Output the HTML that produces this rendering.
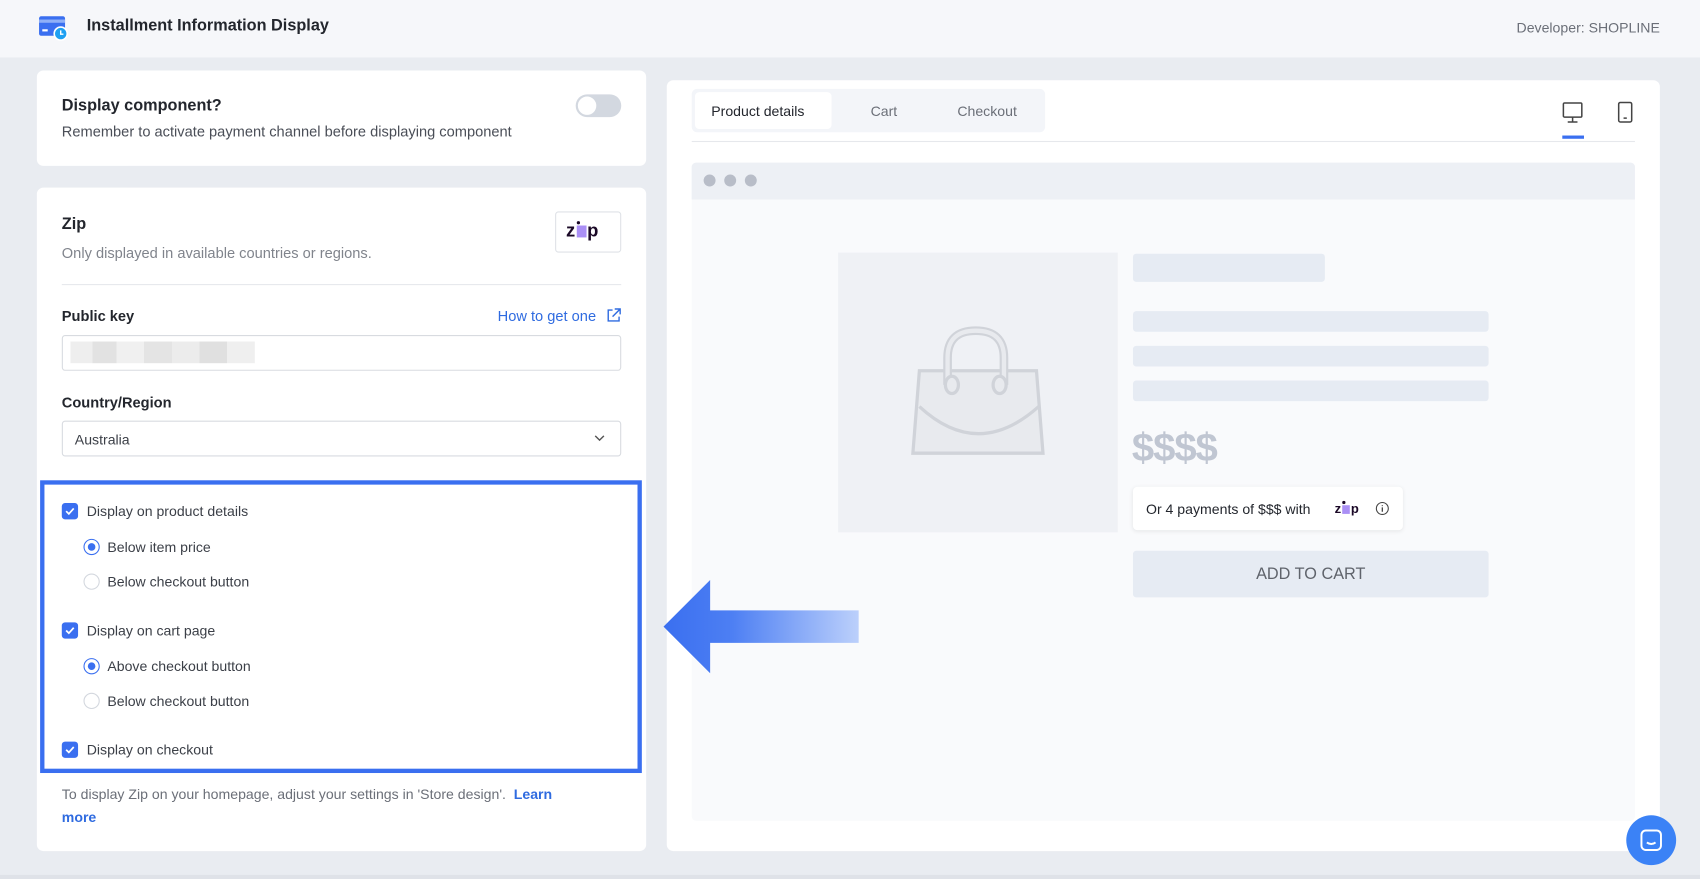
<!DOCTYPE html>
<html><head><meta charset="utf-8"><style>
*{box-sizing:border-box;margin:0;padding:0}
html,body{width:1700px;height:879px;overflow:hidden;background:#e9ecf1;font-family:"Liberation Sans",Arial,sans-serif}
#w{position:absolute;left:0;top:0;width:1568px;height:811px;transform:scale(1.08418);transform-origin:0 0;background:#e9ecf1}
.a{position:absolute}
.card{position:absolute;background:#fff;border-radius:6px}
.t{position:absolute;white-space:nowrap}
.cb{position:absolute;width:15px;height:15px;border-radius:3px;background:#3a6ff0}
.cb svg{position:absolute;left:2px;top:2px}
.rd{position:absolute;width:15px;height:15px;border-radius:50%;border:1.5px solid #3a6ff0;background:#fff}
.rd.on::after{content:"";position:absolute;left:2.5px;top:2.5px;width:7px;height:7px;border-radius:50%;background:#3a6ff0}
.rd.off{border-color:#d3d7de}
.lbl{font-size:13px;color:#3b3f47}
.bar{position:absolute;background:#e6ebf3;border-radius:3px}
.zip{position:absolute;font-weight:900;color:#1a0826;display:flex;align-items:flex-end;gap:1px}
.zip i{display:inline-block;background:#aa8ff5;position:relative}
.zip i::before{content:"";position:absolute;left:0;top:-4px;width:3px;height:3px;border-radius:50%;background:#1a0826}
</style></head><body><div id="w">
<div class="a" style="left:0;top:0;width:1568px;height:53px;background:#f6f7fa"></div>
<svg class="a" style="left:36px;top:14px" width="28" height="24" viewBox="0 0 28 24"><rect x="0" y="1" width="24" height="18" rx="2" fill="#3a6ff0"/><rect x="0" y="4" width="24" height="3" fill="#8fb0f7"/><rect x="3" y="13" width="5" height="2" fill="#fff"/><circle cx="20" cy="17" r="6" fill="#1ea0f2" stroke="#fff" stroke-width="1.5"/><path d="M20 14v3.5h2.5" stroke="#fff" stroke-width="1.3" fill="none"/></svg>
<div class="t" style="left:80px;top:15px;font-size:15px;font-weight:bold;color:#23262d">Installment Information Display</div>
<div class="t" style="right:37px;top:18px;font-size:13px;color:#6b6f78">Developer: SHOPLINE</div>

<div class="card" style="left:34px;top:65px;width:562px;height:88px"></div>
<div class="t" style="left:57px;top:89px;font-size:15px;font-weight:bold;color:#23262d">Display component?</div>
<div class="t" style="left:57px;top:114px;font-size:13.5px;color:#4a4e57">Remember to activate payment channel before displaying component</div>
<div class="a" style="left:531px;top:87px;width:42px;height:21px;border-radius:11px;background:#d3d8e0"></div>
<div class="a" style="left:533px;top:89px;width:17px;height:17px;border-radius:50%;background:#fff"></div>

<div class="card" style="left:34px;top:173px;width:562px;height:612px"></div>
<div class="t" style="left:57px;top:198px;font-size:15px;font-weight:bold;color:#23262d">Zip</div>
<div class="t" style="left:57px;top:226px;font-size:13.5px;color:#80848c">Only displayed in available countries or regions.</div>
<div class="a" style="left:512px;top:195px;width:61px;height:38px;border:1px solid #dfe2e7;border-radius:3px;background:#fff"></div>
<div class="zip" style="left:522px;top:204px;font-size:17px;line-height:17px">z<i style="width:9px;height:11px;margin-bottom:2px"></i>p</div>
<div class="a" style="left:57px;top:262px;width:516px;height:1px;background:#e6e8ec"></div>
<div class="t" style="left:57px;top:284px;font-size:13.5px;font-weight:bold;color:#23262d">Public key</div>
<div class="t" style="left:459px;top:284px;font-size:13.5px;color:#2f6be0">How to get one</div>
<svg class="a" style="left:559px;top:284px" width="14" height="14" viewBox="0 0 14 14"><path d="M6 2H2v10h10V8M8 1h5v5M13 1L6 8" stroke="#2f6be0" stroke-width="1.3" fill="none"/></svg>
<div class="a" style="left:57px;top:309px;width:516px;height:33px;border:1px solid #d8dbe0;border-radius:3px"></div>
<div class="a" style="left:65px;top:315px;width:170px;height:20px;background:linear-gradient(90deg,#eee 0 12%,#e2e2e2 12% 25%,#f0f0f0 25% 40%,#e4e4e4 40% 55%,#ececec 55% 70%,#e0e0e0 70% 85%,#efefef 85%)"></div>
<div class="t" style="left:57px;top:364px;font-size:13.5px;font-weight:bold;color:#23262d">Country/Region</div>
<div class="a" style="left:57px;top:388px;width:516px;height:33px;border:1px solid #d8dbe0;border-radius:3px"></div>
<div class="t" style="left:69px;top:398px;font-size:13px;color:#3b3f47">Australia</div>
<svg class="a" style="left:548px;top:401px" width="10" height="7" viewBox="0 0 10 7"><path d="M1 1l4 4 4-4" stroke="#555" stroke-width="1.3" fill="none"/></svg>

<div class="a" style="left:37px;top:443px;width:555px;height:270px;border:4px solid #3a6ff0"></div>
<div class="cb" style="left:57px;top:464px"><svg width="11" height="11" viewBox="0 0 11 11"><path d="M2 5.5l2.5 2.5L9 3" stroke="#fff" stroke-width="1.6" fill="none"/></svg></div>
<div class="t lbl" style="left:80px;top:464px">Display on product details</div>
<div class="rd on" style="left:77px;top:497px"></div><div class="t lbl" style="left:99px;top:497px">Below item price</div>
<div class="rd off" style="left:77px;top:529px"></div><div class="t lbl" style="left:99px;top:529px">Below checkout button</div>
<div class="cb" style="left:57px;top:574px"><svg width="11" height="11" viewBox="0 0 11 11"><path d="M2 5.5l2.5 2.5L9 3" stroke="#fff" stroke-width="1.6" fill="none"/></svg></div>
<div class="t lbl" style="left:80px;top:574px">Display on cart page</div>
<div class="rd on" style="left:77px;top:607px"></div><div class="t lbl" style="left:99px;top:607px">Above checkout button</div>
<div class="rd off" style="left:77px;top:639px"></div><div class="t lbl" style="left:99px;top:639px">Below checkout button</div>
<div class="cb" style="left:57px;top:684px"><svg width="11" height="11" viewBox="0 0 11 11"><path d="M2 5.5l2.5 2.5L9 3" stroke="#fff" stroke-width="1.6" fill="none"/></svg></div>
<div class="t lbl" style="left:80px;top:684px">Display on checkout</div>
<div class="a" style="left:57px;top:722px;font-size:13px;color:#6b6f78;line-height:21px;width:470px">To display Zip on your homepage, adjust your settings in 'Store design'. &nbsp;<b style="color:#2f6be0">Learn</b><br><b style="color:#2f6be0">more</b></div>

<div class="card" style="left:615px;top:74px;width:916px;height:711px"></div>
<div class="a" style="left:638px;top:82px;width:326px;height:40px;background:#f3f5f9;border-radius:5px"></div>
<div class="a" style="left:641px;top:85px;width:126px;height:34px;background:#fff;border-radius:4px"></div>
<div class="t" style="left:656px;top:95px;font-size:13px;color:#23262d">Product details</div>
<div class="t" style="left:803px;top:95px;font-size:13px;color:#6b6f78">Cart</div>
<div class="t" style="left:883px;top:95px;font-size:13px;color:#6b6f78">Checkout</div>
<div class="a" style="left:638px;top:130px;width:870px;height:1px;background:#e6e8ec"></div>
<svg class="a" style="left:1440px;top:93px" width="22" height="22" viewBox="0 0 22 22"><rect x="2" y="2" width="17" height="13" rx="1" stroke="#444" stroke-width="1.4" fill="none"/><path d="M10.5 15v4M6 19.5h9" stroke="#444" stroke-width="1.4"/></svg>
<div class="a" style="left:1441px;top:125px;width:20px;height:3px;background:#3a6ff0"></div>
<svg class="a" style="left:1490px;top:93px" width="18" height="22" viewBox="0 0 18 22"><rect x="3" y="1.5" width="12" height="18" rx="1.5" stroke="#444" stroke-width="1.4" fill="none"/><path d="M7.5 16h3" stroke="#444" stroke-width="1.4"/></svg>

<div class="a" style="left:638px;top:150px;width:870px;height:607px;background:#f9fafc;border-radius:4px"></div>
<div class="a" style="left:638px;top:150px;width:870px;height:34px;background:#edf0f5;border-radius:4px 4px 0 0"></div>
<div class="a" style="left:649px;top:161px;width:11px;height:11px;border-radius:50%;background:#b8bdc8"></div>
<div class="a" style="left:668px;top:161px;width:11px;height:11px;border-radius:50%;background:#b8bdc8"></div>
<div class="a" style="left:687px;top:161px;width:11px;height:11px;border-radius:50%;background:#b8bdc8"></div>
<div class="a" style="left:773px;top:233px;width:258px;height:258px;background:#eff1f5"></div>
<svg class="a" style="left:838px;top:300px" width="130" height="125" viewBox="0 0 130 125"><path d="M10 42H118L124 118H4Z" fill="#e8eaee" stroke="#d0d3d9" stroke-width="3"/><path d="M10 75Q64 125 120 75" fill="none" stroke="#d0d3d9" stroke-width="3"/><path d="M36 55V30Q36 5 62 5Q88 5 88 30V55" fill="none" stroke="#d0d3d9" stroke-width="8"/><path d="M36 55V30Q36 5 62 5Q88 5 88 30V55" fill="none" stroke="#e8eaee" stroke-width="4"/><ellipse cx="40" cy="55" rx="6" ry="8" fill="#e8eaee" stroke="#d0d3d9" stroke-width="3"/><ellipse cx="84" cy="55" rx="6" ry="8" fill="#e8eaee" stroke="#d0d3d9" stroke-width="3"/></svg>
<div class="bar" style="left:1045px;top:234px;width:177px;height:26px"></div>
<div class="bar" style="left:1045px;top:287px;width:328px;height:19px"></div>
<div class="bar" style="left:1045px;top:319px;width:328px;height:19px"></div>
<div class="bar" style="left:1045px;top:351px;width:328px;height:19px"></div>
<div class="t" style="left:1044px;top:392px;font-size:37px;font-weight:bold;color:#c0c6d2;letter-spacing:-1px">$$$$</div>
<div class="a" style="left:1045px;top:449px;width:249px;height:40px;background:#fff;border-radius:4px;box-shadow:0 1px 4px rgba(0,0,0,.08)"></div>
<div class="t" style="left:1057px;top:462px;font-size:13px;color:#23262d">Or 4 payments of $$$ with</div>
<div class="zip" style="left:1231px;top:463px;font-size:12px;line-height:12px">z<i style="width:7px;height:8px;margin-bottom:1px"></i>p</div>
<svg class="a" style="left:1268px;top:462px" width="14" height="14" viewBox="0 0 14 14"><circle cx="7" cy="7" r="5.5" stroke="#444" fill="none"/><path d="M7 6v4M7 4v.8" stroke="#444" stroke-width="1.2"/></svg>
<div class="a" style="left:1045px;top:508px;width:328px;height:43px;background:#e6ebf3;border-radius:3px"></div>
<div class="t" style="left:1045px;top:521px;width:328px;text-align:center;font-size:15px;color:#5f636b">ADD TO CART</div>

<svg class="a" style="left:610px;top:533px" width="185" height="90" viewBox="0 0 185 90"><defs><linearGradient id="g" x1="0" x2="1"><stop offset="0" stop-color="#3a6ff0"/><stop offset="0.35" stop-color="#4d7ff3"/><stop offset="1" stop-color="#bcd0fb"/></linearGradient></defs><path d="M2 45L45 2V30H182V60H45V88Z" fill="url(#g)"/></svg>

<div class="a" style="left:1500px;top:752px;width:46px;height:46px;border-radius:50%;background:#3b82f6"></div>
<svg class="a" style="left:1512px;top:764px" width="22" height="22" viewBox="0 0 22 22"><rect x="2" y="2" width="18" height="18" rx="4" stroke="#fff" stroke-width="1.8" fill="none"/><path d="M7 13q4 3 8 0" stroke="#fff" stroke-width="1.8" fill="none"/></svg>
<div class="a" style="left:0;top:807px;width:1568px;height:4px;background:#dfe2e8"></div>
</div></body></html>
